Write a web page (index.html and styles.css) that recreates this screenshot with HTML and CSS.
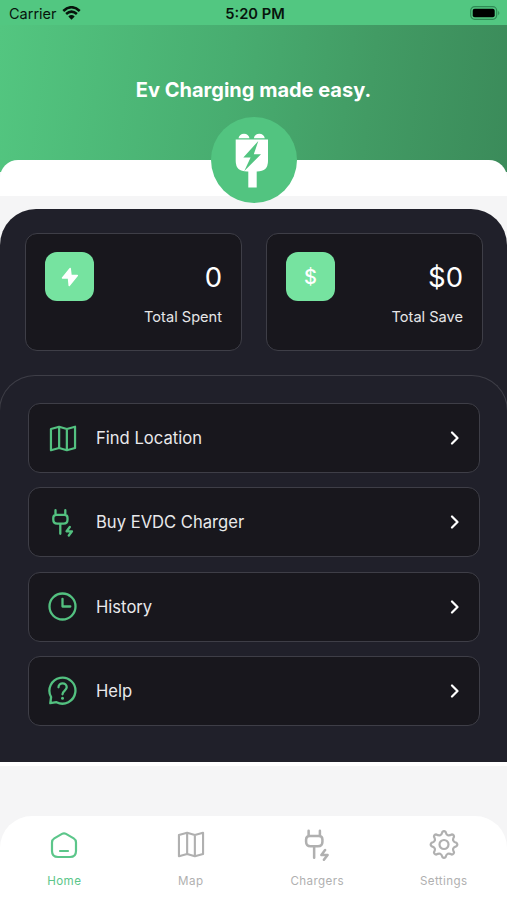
FILE: index.html
```
<!DOCTYPE html>
<html lang="en">
  <head>
    <meta charset="UTF-8" />
    <meta name="viewport" content="width=device-width, initial-scale=1.0" />
    <title>Ev Charging</title>
    <link rel="stylesheet" href="styles.css">
  </head>
  <body>
    <svg width="0" height="0" class="sprite">
      <symbol id="map" viewBox="0 0 28 28">
        <path d="M1.5 4.2 10 1.8 18 4.2 26.5 1.8V23.8L18 26.2 10 23.8 1.5 26.2ZM10 1.8V23.8M18 4.2V26.2" />
      </symbol>
      <symbol id="plug" viewBox="0 0 30 30">
        <path d="M7.5 3.2V7.5M17.3 3.2V7.5M8.5 7.8H16.500Q19.500 7.800 19.500 10.800V12.800Q19.500 16.700 15.600 16.700H9.200Q5.300 16.700 5.300 12.800V10.800Q5.300 7.800 8.500 7.800ZM12.300 16.700V26.800" />
        <path d="M21.800 20 18.600 24.300H24L20.800 28.500" />
      </symbol>
      <symbol id="chevron" viewBox="0 0 10 14">
        <path d="M2 1.5 7.5 7 2 12.5" />
      </symbol>
    </svg>

    <div class="status-bar">
      <div class="carrier">
        <span>Carrier</span>
        <svg class="wifi" viewBox="0 0 19 14">
          <path d="M1.3 5Q9.5-2.5 17.7 5M4.1 8Q9.5 3.3 14.9 8" />
          <path class="dot" d="M9.5 13.8 6.3 10.4Q9.5 7.8 12.7 10.4Z" />
        </svg>
      </div>
      <div class="time">5:20 PM</div>
      <svg class="battery" viewBox="0 0 31 14">
        <rect class="shell" x=".7" y=".7" width="26" height="12.6" rx="4" />
        <rect x="2.7" y="2.7" width="22" height="8.6" rx="2" />
        <path class="cap" d="M28.2 4.7Q30.5 7 28.2 9.3Z" />
      </svg>
    </div>

    <header class="header">
      <h1>Ev Charging made easy.</h1>
    </header>

    <div class="sheet">
      <svg class="logo" viewBox="0 0 86 86">
        <circle cx="43" cy="43" r="43" fill="#52c480" />
        <path fill="#fff" d="M27.5 21.3Q28.5 16.7 33 16.7T38.5 21.3ZM42.8 21.3Q43.8 16.7 48.3 16.7T53.8 21.3ZM24.7 22.5H57V44Q57 54.5 46 54.5H45.7V70.5H37.3V54.5H36Q24.7 54.5 24.7 44Z" />
        <path fill="#52c480" d="M47.3 24 32.3 40.5H39.6L33.3 54 50 37.3H42.8Z" />
      </svg>
    </div>

    <main class="panel">
      <div class="stats">
        <div class="stat">
          <div class="stat-icon">
            <svg width="18" height="20" viewBox="0 0 18 20">
              <path fill="#fff" stroke="#fff" stroke-width="1.5" stroke-linejoin="round" d="M9.2 1.5 1.5 11H7.5L8.2 18.5 16.3 8.5H10Z" />
            </svg>
          </div>
          <div class="stat-text">
            <div class="value">0</div>
            <div class="label">Total Spent</div>
          </div>
        </div>
        <div class="stat">
          <div class="stat-icon">$</div>
          <div class="stat-text">
            <div class="value">$0</div>
            <div class="label">Total Save</div>
          </div>
        </div>
      </div>

      <div class="menu">
        <a class="row">
          <svg class="icon map"><use href="#map" /></svg>
          <span>Find Location</span>
          <svg class="chevron"><use href="#chevron" /></svg>
        </a>
        <a class="row">
          <svg class="icon plug"><use href="#plug" /></svg>
          <span>Buy EVDC Charger</span>
          <svg class="chevron"><use href="#chevron" /></svg>
        </a>
        <a class="row">
          <svg class="icon" viewBox="0 0 30 30">
            <circle cx="14.5" cy="14.5" r="13" />
            <path d="M14.5 6.8V14.5H22.3" />
          </svg>
          <span>History</span>
          <svg class="chevron"><use href="#chevron" /></svg>
        </a>
        <a class="row">
          <svg class="icon" viewBox="0 0 30 30">
            <path d="M3.1 21A13 13 0 1 1 8.5 26.2L2.3 27.2Z" />
            <path d="M10.5 11.3C10.5 6.1 18.7 6.1 18.7 11.3 18.7 14.5 14.5 14.6 14.5 18.3" />
            <circle class="dot" cx="14.5" cy="22.3" r="1.5" />
          </svg>
          <span>Help</span>
          <svg class="chevron"><use href="#chevron" /></svg>
        </a>
      </div>
    </main>

    <nav class="tabs">
      <a class="tab active">
        <svg viewBox="0 0 30 32">
          <path d="M13 4.9Q15 3.7 17 4.9L24.7 9.4Q27 10.8 27 13.5V22Q27 28 21 28H9Q3 28 3 22V13.5Q3 10.8 5.3 9.4ZM11 22H19" />
        </svg>
        <span>Home</span>
      </a>
      <a class="tab">
        <svg class="map"><use href="#map" /></svg>
        <span>Map</span>
      </a>
      <a class="tab">
        <svg class="plug"><use href="#plug" /></svg>
        <span>Chargers</span>
      </a>
      <a class="tab">
        <svg viewBox="-15 -15.5 30 32">
          <path d="M-1.6-12.6Q0-14 1.6-12.6Q2.98-7.2 7.78-10.04Q9.9-9.9 10.04-7.78Q7.2-2.98 12.6-1.6Q14 0 12.6 1.6Q7.2 2.98 10.04 7.78Q9.9 9.9 7.78 10.04Q2.98 7.2 1.6 12.6Q0 14-1.6 12.6Q-2.98 7.2-7.78 10.04Q-9.9 9.9-10.04 7.78Q-7.2 2.98-12.6 1.6Q-14 0-12.6-1.6Q-7.2-2.98-10.04-7.78Q-9.9-9.9-7.78-10.04Q-2.98-7.2-1.6-12.6Z" />
          <circle r="4.5" />
        </svg>
        <span>Settings</span>
      </a>
    </nav>
  </body>
</html>
```

FILE: styles.css
```
* {
  box-sizing: border-box;
}

body {
  margin: 0;
  height: 900px;
  display: flex;
  flex-direction: column;
  overflow: hidden;
  background: #f5f5f6;
  font-family: "Inter", sans-serif;
}

svg {
  display: block;
}

.sprite {
  position: absolute;
}

.status-bar {
  display: grid;
  grid-template-columns: 1fr auto 1fr;
  align-items: center;
  height: 25px;
  padding: 2px 6px 0 9px;
  background: #52c781;
  color: #07140c;
  font-size: 14.5px;
}

.carrier {
  display: flex;
  align-items: center;
  gap: 5px;
}

.wifi {
  width: 19px;
  height: 14px;
  margin-top: -2px;
  fill: none;
  stroke: #07140c;
  stroke-width: 2.6;
}

.wifi .dot {
  fill: #07140c;
  stroke: none;
}

.time {
  font-size: 14.7px;
  font-weight: 600;
}

.battery {
  width: 31px;
  height: 14px;
  margin-top: -1px;
  justify-self: end;
}

.battery .shell {
  fill: none;
  stroke: #2f8a55;
  stroke-width: 1.2;
}

.battery .cap {
  fill: #2f8a55;
}

.header {
  height: 147px;
  padding-top: 52px;
  background: linear-gradient(97deg, #53c680, #48ad70 45%, #429b64 72%, #3b8b5a);
  text-align: center;
}

.header h1 {
  margin: 0;
  color: #fff;
  font-size: 20px;
  line-height: 26px;
  font-weight: 700;
}

.sheet {
  position: relative;
  height: 36px;
  margin-top: -12px;
  border-radius: 18px 18px 0 0;
  background: #fff;
}

.logo {
  position: absolute;
  top: -43px;
  left: 50%;
  width: 86px;
  height: 86px;
  transform: translateX(-50%);
}

.panel {
  height: 553px;
  margin-top: 13px;
  padding-top: 24px;
  border-radius: 36px 36px 0 0;
  background: #20202a;
  box-shadow: 0 4px 0 #fff;
}

.stats {
  display: flex;
  gap: 24px;
  padding: 0 24px 0 25px;
}

.stat {
  display: flex;
  flex: 1;
  justify-content: space-between;
  height: 118px;
  padding: 18px 19px;
  border: 1px solid #3e3e47;
  border-radius: 12px;
  background: #18171d;
}

.stat-icon {
  display: flex;
  align-items: center;
  justify-content: center;
  width: 49px;
  height: 49px;
  border-radius: 12px;
  background: #76e3a0;
  color: #fff;
  font-size: 20px;
  font-weight: 500;
}

.stat-text {
  text-align: right;
  color: #fff;
}

.value {
  margin-top: 7px;
  font-size: 27.5px;
  line-height: 36px;
}

.label {
  margin-top: 12px;
  color: #e6e6e8;
  font-size: 14.6px;
  line-height: 20px;
}

.menu {
  display: flex;
  flex-direction: column;
  gap: 14.4px;
  height: 387px;
  margin: 24px -1px 0;
  padding: 27px 27px 0 28px;
  border: 1px solid #3e3e47;
  border-bottom: 0;
  border-radius: 36px 36px 0 0;
}

.row {
  display: flex;
  align-items: center;
  flex: none;
  height: 70px;
  padding: 0 19px;
  border: 1px solid #3e3e47;
  border-radius: 12px;
  background: #18171d;
  color: #e9e9eb;
  font-size: 16.6px;
}

.row span {
  flex: 1;
  margin-left: 18px;
}

.icon {
  width: 30px;
  height: 30px;
  fill: none;
  stroke: #53c180;
  stroke-width: 2.3;
  stroke-linejoin: round;
  stroke-linecap: round;
}

.icon.map {
  height: 27px;
}

.icon .dot {
  fill: #53c180;
  stroke: none;
}

.chevron {
  width: 10px;
  height: 14px;
  fill: none;
  stroke: #fff;
  stroke-width: 2.2;
  stroke-linejoin: round;
  stroke-linecap: round;
}

.tabs {
  display: grid;
  grid-template-columns: repeat(4, 1fr);
  height: 84px;
  margin-top: auto;
  padding: 13px 0 0 1px;
  border-radius: 32px 32px 0 0;
  background: #fff;
}

.tab {
  display: flex;
  flex-direction: column;
  align-items: center;
  gap: 12px;
  color: #b0b0b0;
  font-size: 11.6px;
  line-height: 16px;
  letter-spacing: 0.4px;
}

.tab svg {
  width: 30px;
  height: 32px;
  fill: none;
  stroke: currentColor;
  stroke-width: 2.2;
  stroke-linejoin: round;
  stroke-linecap: round;
}

.tab .map {
  height: 27px;
  margin: 2px 0 3px;
}

.tab .plug {
  width: 34.5px;
  height: 34.5px;
  margin: -2.5px 0 0;
}

.tab.active {
  color: #5cc68a;
}
```
